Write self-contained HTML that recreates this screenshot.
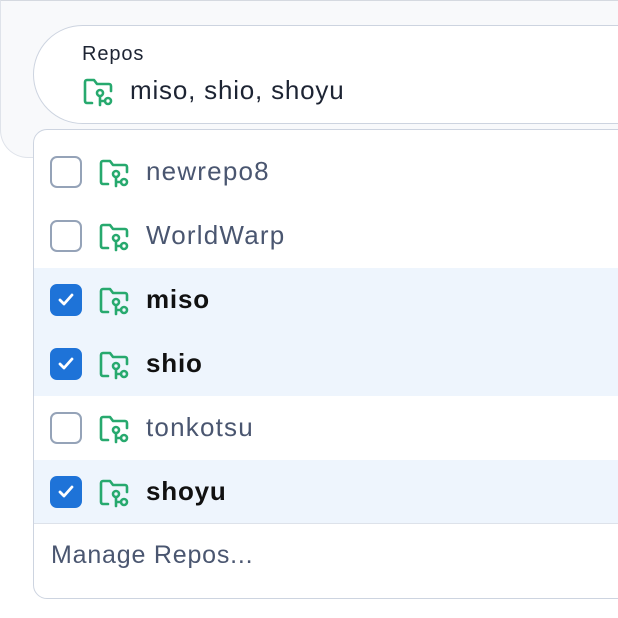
<!DOCTYPE html>
<html><head><meta charset="utf-8"><style>
*{box-sizing:border-box;margin:0;padding:0}
body{width:618px;height:618px;overflow:hidden;background:#fff;font-family:"Liberation Sans",sans-serif;position:relative}
.outer{position:absolute;left:0;top:0;width:700px;height:158px;background:#f8f9fb;border-top:1px solid #d5d9e0;border-left:1px solid #dfe3ea;border-bottom:1px solid #dfe3ea;border-bottom-left-radius:28px}
.pill{position:absolute;left:33px;top:25px;width:700px;height:99px;background:#fff;border:1.5px solid #cdd4e0;border-radius:50px}
.lbl{position:absolute;left:82px;top:43px;font-size:20px;letter-spacing:0.9px;color:#1d2433}
.val{position:absolute;left:130px;top:75px;font-size:26px;letter-spacing:0.8px;color:#1d2433}
.dd{position:absolute;left:33px;top:129px;width:700px;height:470px;background:#fff;border:1.5px solid #cdd4e0;border-radius:14px;overflow:hidden}
.row{position:absolute;left:0;width:100%;height:64px}
.row.sel{background:#eef5fd}
.cb{position:absolute;left:16px;top:16px;width:32px;height:32px;border:2px solid #95a3b8;border-radius:7px;background:#fff}
.sel .cb{background:#1e73d8;border-color:#1e73d8}
.ic{position:absolute;left:65px;top:18px}
.t{position:absolute;left:112px;top:16px;font-size:26px;letter-spacing:1.2px;color:#4a5670}
.sel .t{color:#111;font-weight:bold;letter-spacing:0.8px}
.div{position:absolute;left:0;top:393px;width:100%;border-top:1.5px solid #dde2ea}
.man{position:absolute;left:17px;top:411px;font-size:25px;letter-spacing:0.8px;color:#4a5670}
</style></head><body>
<div class="outer"></div>
<div class="pill"></div>
<div class="lbl">Repos</div>
<svg style="position:absolute;left:83px;top:77px" width="30" height="30" viewBox="0 0 30 30"><g fill="none" stroke="#27a96e" stroke-width="2.6" stroke-linecap="round" stroke-linejoin="round"><path d="M9 26H4a2 2 0 0 1-2-2V5a2 2 0 0 1 2-2h7l3 4h12a2 2 0 0 1 2 2v5"/><circle cx="17" cy="16" r="3"/><path d="M17 19v9M17 24h5"/><circle cx="25" cy="24" r="3"/></g></svg>
<div class="val">miso, shio, shoyu</div>
<div class="dd">
<div class="row" style="top:10px"><div class="cb"></div><svg class="ic" width="30" height="30" viewBox="0 0 30 30"><g fill="none" stroke="#27a96e" stroke-width="2.6" stroke-linecap="round" stroke-linejoin="round"><path d="M9 26H4a2 2 0 0 1-2-2V5a2 2 0 0 1 2-2h7l3 4h12a2 2 0 0 1 2 2v5"/><circle cx="17" cy="16" r="3"/><path d="M17 19v9M17 24h5"/><circle cx="25" cy="24" r="3"/></g></svg><div class="t">newrepo8</div></div>
<div class="row" style="top:74px"><div class="cb"></div><svg class="ic" width="30" height="30" viewBox="0 0 30 30"><g fill="none" stroke="#27a96e" stroke-width="2.6" stroke-linecap="round" stroke-linejoin="round"><path d="M9 26H4a2 2 0 0 1-2-2V5a2 2 0 0 1 2-2h7l3 4h12a2 2 0 0 1 2 2v5"/><circle cx="17" cy="16" r="3"/><path d="M17 19v9M17 24h5"/><circle cx="25" cy="24" r="3"/></g></svg><div class="t">WorldWarp</div></div>
<div class="row sel" style="top:138px"><div class="cb"><svg width="28" height="28" viewBox="0 0 28 28"><path d="M8 14l4 4 8-9" fill="none" stroke="#fff" stroke-width="2.8" stroke-linecap="round" stroke-linejoin="round"/></svg></div><svg class="ic" width="30" height="30" viewBox="0 0 30 30"><g fill="none" stroke="#27a96e" stroke-width="2.6" stroke-linecap="round" stroke-linejoin="round"><path d="M9 26H4a2 2 0 0 1-2-2V5a2 2 0 0 1 2-2h7l3 4h12a2 2 0 0 1 2 2v5"/><circle cx="17" cy="16" r="3"/><path d="M17 19v9M17 24h5"/><circle cx="25" cy="24" r="3"/></g></svg><div class="t">miso</div></div>
<div class="row sel" style="top:202px"><div class="cb"><svg width="28" height="28" viewBox="0 0 28 28"><path d="M8 14l4 4 8-9" fill="none" stroke="#fff" stroke-width="2.8" stroke-linecap="round" stroke-linejoin="round"/></svg></div><svg class="ic" width="30" height="30" viewBox="0 0 30 30"><g fill="none" stroke="#27a96e" stroke-width="2.6" stroke-linecap="round" stroke-linejoin="round"><path d="M9 26H4a2 2 0 0 1-2-2V5a2 2 0 0 1 2-2h7l3 4h12a2 2 0 0 1 2 2v5"/><circle cx="17" cy="16" r="3"/><path d="M17 19v9M17 24h5"/><circle cx="25" cy="24" r="3"/></g></svg><div class="t">shio</div></div>
<div class="row" style="top:266px"><div class="cb"></div><svg class="ic" width="30" height="30" viewBox="0 0 30 30"><g fill="none" stroke="#27a96e" stroke-width="2.6" stroke-linecap="round" stroke-linejoin="round"><path d="M9 26H4a2 2 0 0 1-2-2V5a2 2 0 0 1 2-2h7l3 4h12a2 2 0 0 1 2 2v5"/><circle cx="17" cy="16" r="3"/><path d="M17 19v9M17 24h5"/><circle cx="25" cy="24" r="3"/></g></svg><div class="t">tonkotsu</div></div>
<div class="row sel" style="top:330px"><div class="cb"><svg width="28" height="28" viewBox="0 0 28 28"><path d="M8 14l4 4 8-9" fill="none" stroke="#fff" stroke-width="2.8" stroke-linecap="round" stroke-linejoin="round"/></svg></div><svg class="ic" width="30" height="30" viewBox="0 0 30 30"><g fill="none" stroke="#27a96e" stroke-width="2.6" stroke-linecap="round" stroke-linejoin="round"><path d="M9 26H4a2 2 0 0 1-2-2V5a2 2 0 0 1 2-2h7l3 4h12a2 2 0 0 1 2 2v5"/><circle cx="17" cy="16" r="3"/><path d="M17 19v9M17 24h5"/><circle cx="25" cy="24" r="3"/></g></svg><div class="t">shoyu</div></div>
<div class="div"></div>
<div class="man">Manage Repos...</div>
</div>
</body></html>
